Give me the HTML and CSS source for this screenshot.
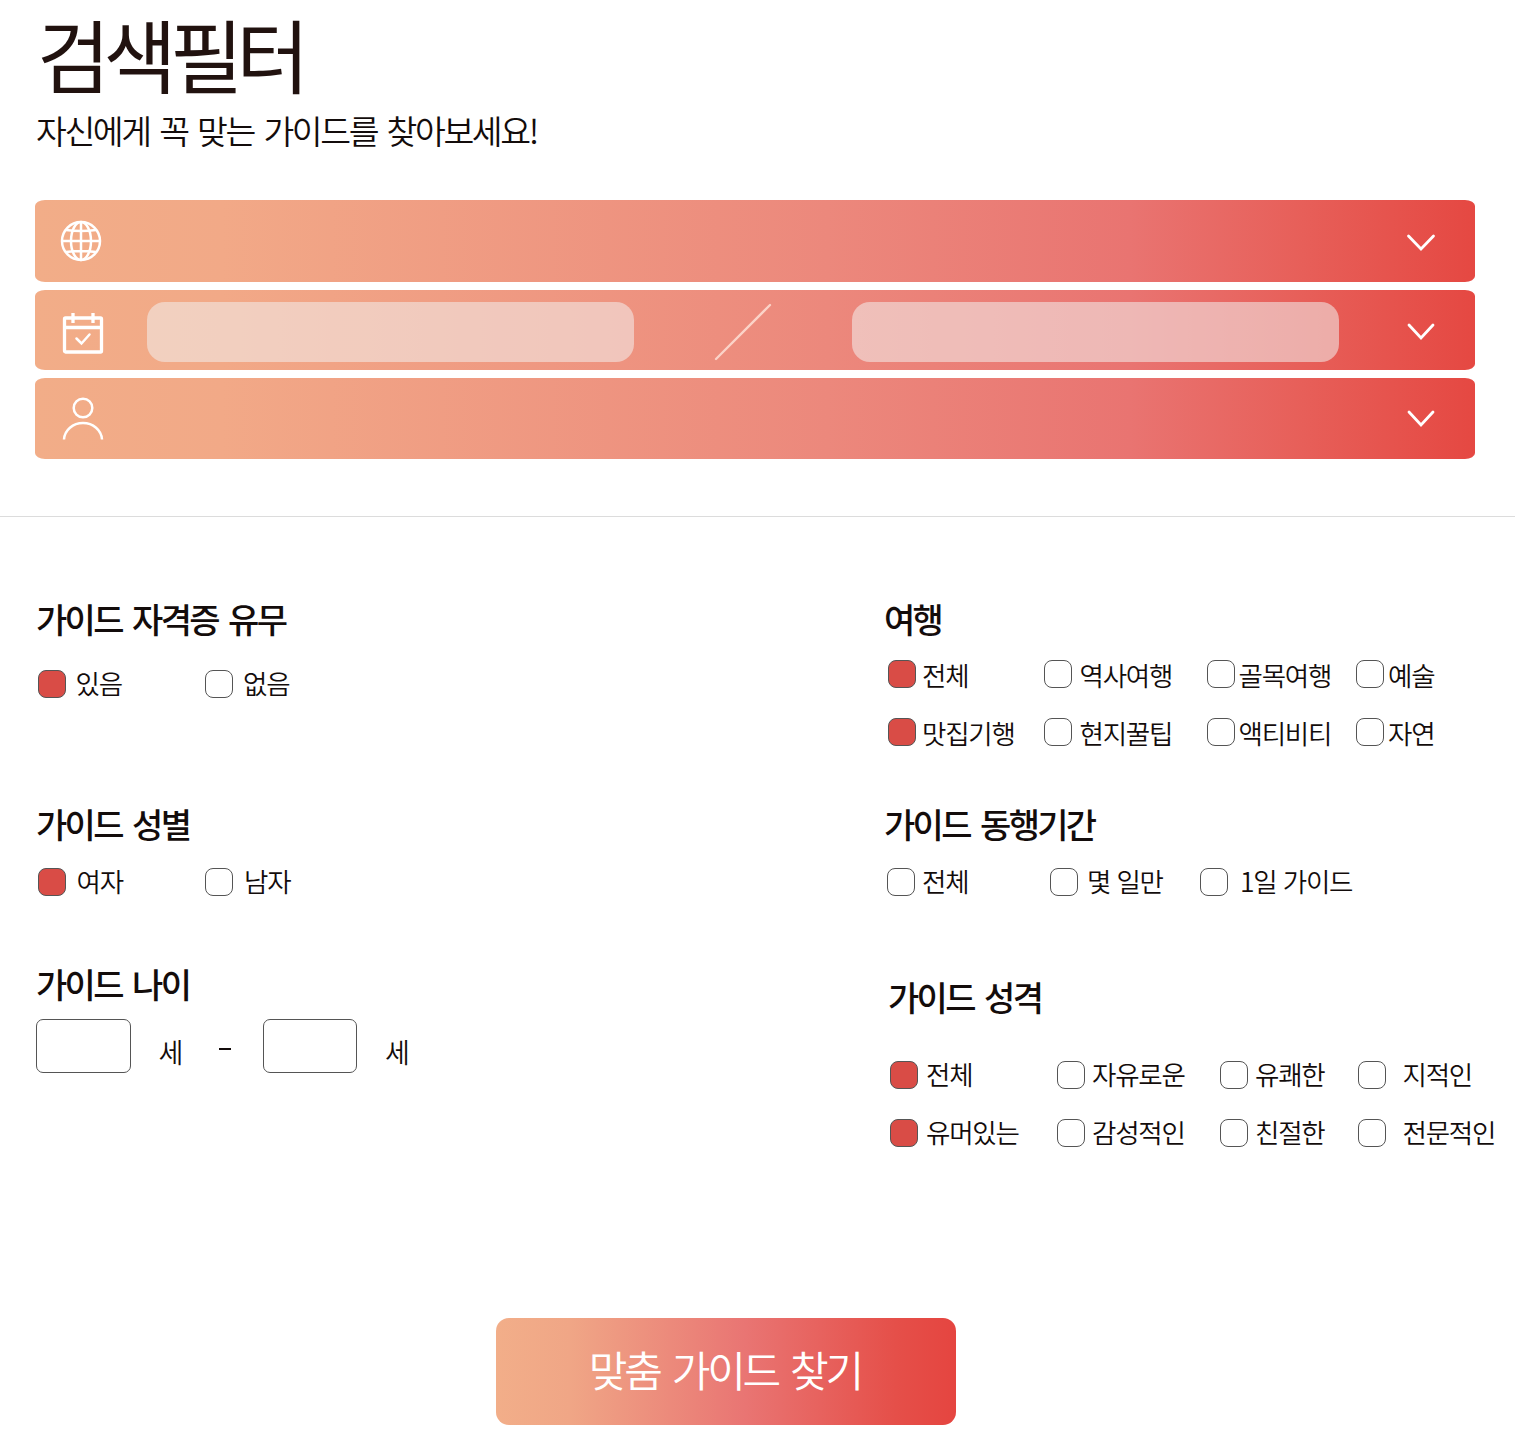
FILE: index.html
```
<!DOCTYPE html>
<html lang="ko">
<head>
<meta charset="utf-8">
<title>검색필터</title>
<link rel="stylesheet" href="styles.css">
</head>
<body>
<header class="intro">
  <h1 class="title">검색필터</h1>
  <p class="subtitle">자신에게 꼭 맞는 가이드를 찾아보세요!</p>
</header>
<section class="bars">
  <div class="bar bar-place">
    <svg class="icon" width="44" height="44" viewBox="0 0 44 44"><circle cx="22" cy="22" r="19"/><ellipse cx="22" cy="22" rx="10" ry="19"/><path d="M22 3v38M3 22h38M7 11Q22 13 37 11M7 33Q22 31 37 33"/></svg>
    <svg class="chevron" width="30" height="20" viewBox="0 0 30 20"><path d="M2.500 3L15 16 27.500 3"/></svg>
  </div>
  <div class="bar bar-date">
    <svg class="icon" width="44" height="44" viewBox="0 0 44 44"><g class="heavy"><rect x="3.500" y="7" width="37" height="34" rx="1"/><path d="M2 16.500h40M12 2v10M32 2v10"/></g><path class="check" d="M15.500 27.500l5 5 8-9"/></svg>
    <div class="field"></div>
    <svg class="slash" width="60" height="60" viewBox="0 0 60 60"><path d="M3 57L57 3"/></svg>
    <div class="field"></div>
    <svg class="chevron" width="30" height="20" viewBox="0 0 30 20"><path d="M3 3L15 16 27 3"/></svg>
  </div>
  <div class="bar bar-person">
    <svg class="icon" width="44" height="46" viewBox="0 0 44 46"><circle cx="22" cy="12" r="9.300"/><path d="M3 43.500C3.500 34 12 27 22 27S40.500 34 41 43.500"/></svg>
    <svg class="chevron" width="30" height="20" viewBox="0 0 30 20"><path d="M3 3L15 16 27 3"/></svg>
  </div>
</section>
<hr class="divider">
<main class="filters">
  <div class="col">
    <section class="group license">
      <h2>가이드 자격증 유무</h2>
      <div class="options pair">
        <label><i class="box on"></i><span>있음</span></label><label><i class="box"></i><span>없음</span></label>
      </div>
    </section>
    <section class="group gender">
      <h2>가이드 성별</h2>
      <div class="options pair">
        <label><i class="box on"></i><span>여자</span></label><label><i class="box"></i><span>남자</span></label>
      </div>
    </section>
    <section class="group age">
      <h2>가이드 나이</h2>
      <div class="range">
        <span class="num"></span><span class="unit">세</span><span class="dash"></span><span class="num"></span><span class="unit">세</span>
      </div>
    </section>
  </div>
  <div class="col">
    <section class="group travel">
      <h2>여행</h2>
      <div class="options">
        <label class="first"><i class="box on"></i><span>전체</span></label><label class="wide"><i class="box"></i><span>역사여행</span></label><label><i class="box"></i><span>골목여행</span></label><label><i class="box"></i><span>예술</span></label>
        <label class="first"><i class="box on"></i><span>맛집기행</span></label><label class="wide"><i class="box"></i><span>현지꿀팁</span></label><label><i class="box"></i><span>액티비티</span></label><label><i class="box"></i><span>자연</span></label>
      </div>
    </section>
    <section class="group period">
      <h2>가이드 동행기간</h2>
      <div class="options">
        <label class="first"><i class="box"></i><span>전체</span></label><label class="mid"><i class="box"></i><span>몇 일만</span></label><label class="wide"><i class="box"></i><span>1일 가이드</span></label>
      </div>
    </section>
    <section class="group nature">
      <h2>가이드 성격</h2>
      <div class="options">
        <label class="first"><i class="box on"></i><span>전체</span></label><label><i class="box"></i><span>자유로운</span></label><label><i class="box"></i><span>유쾌한</span></label><label class="wide"><i class="box"></i><span>지적인</span></label>
        <label class="first"><i class="box on"></i><span>유머있는</span></label><label><i class="box"></i><span>감성적인</span></label><label><i class="box"></i><span>친절한</span></label><label class="wide"><i class="box"></i><span>전문적인</span></label>
      </div>
    </section>
  </div>
</main>
<button class="submit" type="button">맞춤 가이드 찾기</button>
</body>
</html>
```
FILE: styles.css
```
* { box-sizing: border-box; }
body {
  margin: 0;
  height: 1450px;
  background: #fff;
  color: #130c0b;
  font-family: "Noto Sans CJK KR", sans-serif;
  font-weight: 350;
  white-space: nowrap;
}
h1, h2, p { margin: 0; }
.intro { height: 199.500px; padding-left: 37px; }
.title {
  height: 110px;
  line-height: 105px;
  font-size: 79.500px;
  font-weight: 400;
  letter-spacing: -6.700px;
  color: #21120f;
}
.subtitle {
  height: 44px;
  margin-left: -1px;
  line-height: 40px;
  font-size: 33.500px;
  letter-spacing: -2.400px;
  word-spacing: 2.500px;
}
.bars { width: 1440px; margin-left: 35px; }
.bar {
  display: flex;
  align-items: center;
  height: 81px;
  margin-bottom: 8px;
  padding: 0 39px 0 26px;
  border-radius: 10px / 6px;
  background: linear-gradient(90deg, #f2ad88 0%, #f2a987 13%, #ec887c 55%, #e97471 76%, #e75f59 88%, #e54842 100%);
}
.bar-place { height: 82px; padding-left: 24px; }
.bar-date { height: 80.500px; }
.bar svg { flex: none; fill: none; stroke: #fff; stroke-width: 2.500; }
.bar-date .icon { margin-top: 6px; }
.bar .heavy { stroke-width: 3.300; }
.bar .check { stroke-width: 2.500; stroke-linecap: round; }
.bar .chevron { margin: 4px 0 0 auto; stroke-width: 2.800; stroke-linecap: round; }
.bar-person .chevron { margin-top: 0; }
.field {
  width: 487px;
  height: 60px;
  margin: 4px 0 0 41.500px;
  border-radius: 18px;
  background: rgba(243, 238, 236, .56);
}
.bar .slash { margin: 4px 0 0 79.500px; stroke: #fbd3c8; stroke-width: 2.300; stroke-linecap: round; }
.slash + .field { margin-left: 79px; }
.divider { height: 1px; margin: 56.500px 0 0; border: 0; background: #dcdcdc; }
.filters {
  display: grid;
  grid-template-columns: 848px 1fr;
  height: 801px;
  padding: 83px 0 0 36px;
}
.group { display: flex; flex-direction: column; }
h2 {
  height: 40px;
  line-height: 38px;
  font-size: 34px;
  font-weight: 500;
  letter-spacing: -2.700px;
  word-spacing: 3.500px;
}
.options {
  display: grid;
  row-gap: 30px;
  font-size: 26.500px;
  letter-spacing: -1.200px;
}
label { display: flex; align-items: center; gap: 6px; height: 28px; }
label span { padding-bottom: 2px; }
.box {
  flex: none;
  width: 28px;
  height: 28px;
  border: 1px solid #555;
  border-radius: 8px;
  background: #fff;
}
.box.on { background: #d94c46; }
.pair { grid-template-columns: 167.500px 1fr; margin-left: 1.500px; }
.pair label { gap: 11px; }
.license { height: 205px; }
.license .options { margin-top: 30px; }
.license span { margin-left: -1px; }
.gender { height: 160px; }
.gender .options { margin-top: 23px; }
.range { display: flex; align-items: center; height: 54px; margin-top: 14px; font-size: 27px; }
.num { width: 94.500px; height: 54px; border: 1px solid #555; border-radius: 7px; }
.unit { width: 28px; margin: 11px 0 0 28px; }
.dash { width: 12px; height: 2px; margin: 6px 32px 0 32px; background: #130c0b; }
.travel { height: 205px; }
.travel .options { grid-template-columns: 155.500px 163px 149.500px 1fr; margin: 20px 0 0 4px; }
.travel label { gap: 4px; }
.travel span { padding: 1px 0 0; }
.travel .wide { gap: 8px; }
.travel .first { gap: 6px; }
.period { height: 173px; }
.period .options { grid-template-columns: 163px 150px 1fr; margin: 23px 0 0 3px; }
.period .first { gap: 7px; }
.period .mid { gap: 9px; }
.period .wide { gap: 12px; }
.nature { margin-left: 4px; }
.nature .options { grid-template-columns: 167px 163px 137.500px 1fr; margin: 43px 0 0 2px; }
.nature label { gap: 7px; }
.nature .first { gap: 8px; }
.nature .wide { gap: 17px; }
.submit {
  display: block;
  width: 460px;
  height: 107px;
  margin-left: 496.400px;
  padding: 0 3px 5px 0;
  border: 0;
  border-radius: 13px;
  background: linear-gradient(90deg, #f2ae89 0%, #f0a686 16%, #e97573 54%, #e54f49 87%, #e54540 100%);
  color: #fff;
  font: 350 42px "Noto Sans CJK KR", sans-serif;
  letter-spacing: -3.200px;
  word-spacing: 3.500px;
}
```
